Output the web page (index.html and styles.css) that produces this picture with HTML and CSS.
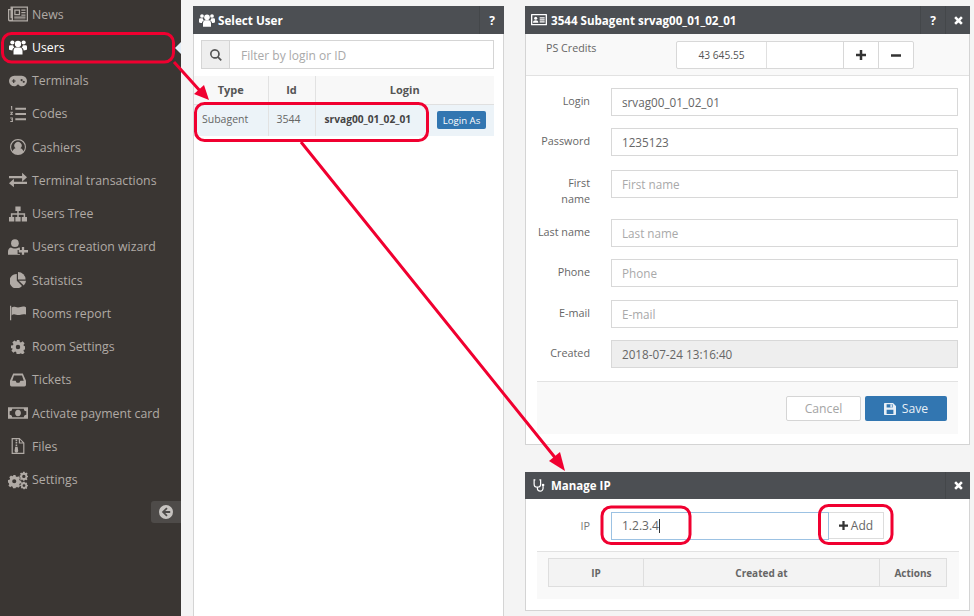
FILE: index.html
```html
<!DOCTYPE html>
<html lang="en">
<head>
<meta charset="utf-8">
<title>Manage IP</title>
<link rel="stylesheet" href="styles.css">
</head>
<body>
<svg width="0" height="0" class="defs">
  <defs>
    <symbol id="i-users" viewBox="0 0 24 20"><circle cx="12" cy="6" r="4.2"/><circle cx="4.5" cy="4" r="2.8"/><circle cx="19.5" cy="4" r="2.8"/><path d="M6 20v-5c0-3 2-4.500 3-4.500h6c1 0 3 1.500 3 4.500v5zM0 13V9.500C0 8 1 7.500 2 7.500h3.500c.3 1.500 1 2.500 1.800 3.200C5.500 11.500 4.500 13 4.500 14.500 2 14.500 0 14 0 13zM24 13V9.500c0-1.500-1-2-2-2h-3.500c-.3 1.500-1 2.500-1.800 3.200 1.800.8 2.800 2.300 2.800 3.800C22 14.500 24 14 24 13z"/></symbol>
    <symbol id="i-news" viewBox="0 0 24 18"><path fill-rule="evenodd" d="M0 3h3V0h21v18H2a2 2 0 0 1-2-2zM4.500 1.500V16H2a.5.500 0 0 1-.5-.5v-11h1.500V14h1.500zM6 1.500V16.500H22.500V1.500z M1 3z"/><path fill-rule="evenodd" d="M7.500 3.500h7v7h-7zM9 5v4h4V5z"/><path d="M16 3.500h5V5h-5zM16 6.500h5V8h-5zM16 9.500h5V11h-5zM7.500 12h13.500v1.500H7.500zM7.500 14.300h13.500v1H7.500z"/></symbol>
    <symbol id="i-game" viewBox="0 0 24 14"><path fill-rule="evenodd" d="M7 0h10a7 7 0 0 1 0 14c-2 0-3.500-1-4.500-2.500h-1C10.500 13 9 14 7 14A7 7 0 0 1 7 0zM5.500 4.500v1.700H3.800v1.600h1.700v1.700h1.600V7.800h1.700V6.200H7.100V4.500zM16.800 4.200a1.500 1.500 0 1 0 .01 0zM19.600 6.500a1.500 1.500 0 1 0 .01 0z"/></symbol>
    <symbol id="i-list" viewBox="0 0 18 18"><path d="M6 2h12v2.300H6zM6 7.800h12v2.300H6zM6 13.700h12V16H6z"/><path d="M1 0h1.500v4.500h-1zM.3 6.500h3v1.200l-1.600 1.500h1.600v1h-3V9l1.600-1.500H.3zM.3 13h3v5h-3v-1h2v-1h-1v-1h1v-1h-2z"/></symbol>
    <symbol id="i-usercircle" viewBox="0 0 20 20"><path fill-rule="evenodd" d="M10 0a10 10 0 1 1 0 20 10 10 0 0 1 0-20zM10 1.500a8.500 8.500 0 0 0-6.700 13.700C4 13 5.300 11.800 7 11.500a4.500 4.500 0 1 1 6 0c1.700.3 3 1.500 3.700 3.700A8.500 8.500 0 0 0 10 1.500z"/></symbol>
    <symbol id="i-exchange" viewBox="0 0 22 18"><path d="M0 4h16V0l6 5.500-6 5.500V7H0zM22 11H6V7.500L0 13l6 5v-4h16z"/></symbol>
    <symbol id="i-tree" viewBox="0 0 24 20"><path d="M8.500 0h7v6h-7zM0 14h7v6H0zM8.500 14h7v6h-7zM17 14h7v6h-7z"/><path d="M11 6h2v3h8.500v5h-2v-3H13v3h-2v-3H4.500v3h-2V9H11z"/></symbol>
    <symbol id="i-userplus" viewBox="0 0 26 20"><circle cx="9" cy="5" r="5"/><path d="M0 20v-4c0-3 2-5.500 4-5.500 1.500 1 3 1.500 5 1.500s3.500-.5 5-1.500c.5 0 1 .2 1.500.5V14h-3v5h3v1z"/><path d="M18 10h3v4h5v3h-5v3h-3v-3h-4v-3h4z"/></symbol>
    <symbol id="i-pie" viewBox="0 0 20 20"><path d="M8.500 2.500V11l6.500 6.500A9 9 0 1 1 8.500 2.500z"/><path d="M10 0a9.500 9.500 0 0 1 9.500 9.500H10z"/><path d="M11 11h9a9 9 0 0 1-2.800 6z"/></symbol>
    <symbol id="i-flag" viewBox="0 0 20 18"><path d="M0 0h1.500v18H0z"/><path d="M2 2c3-2 5 0 8 0s5-2 8-1c1 .3 2 1 2 1v9c-3-1-5 0-8 .5-3 .5-5-1-7-1-1 0-2 .5-3 1.500z"/></symbol>
    <symbol id="i-cog" viewBox="0 0 20 20"><path fill-rule="evenodd" d="M8 0h4l.6 2.800 1.600.7 2.400-1.600 2.800 2.800-1.600 2.400.7 1.600 2.800.6v4l-2.800.6-.7 1.600 1.600 2.400-2.800 2.800-2.400-1.600-1.600.7L12 20H8l-.6-2.800-1.600-.7-2.400 1.600-2.800-2.800 1.600-2.400-.7-1.600L0 12V8l2.800-.6.700-1.600L1.900 3.400l2.800-2.800 2.400 1.600 1.600-.7zM10 6.800a3.200 3.200 0 1 0 0 6.400 3.200 3.200 0 0 0 0-6.400z"/></symbol>
    <symbol id="i-inbox" viewBox="0 0 20 16"><path fill-rule="evenodd" d="M4 0h12l4 9v5a2 2 0 0 1-2 2H2a2 2 0 0 1-2-2V9zM5 2.500 2.800 9h4.200l1.300 2.500h3.400L13 9h4.200L15 2.500z"/></symbol>
    <symbol id="i-money" viewBox="0 0 24 14"><path fill-rule="evenodd" d="M0 0h24v14H0zM5 2a3 3 0 0 1-3 3v4a3 3 0 0 1 3 3h14a3 3 0 0 1 3-3V5a3 3 0 0 1-3-3zM12 3c2.200 0 3.500 1.800 3.500 4s-1.300 4-3.500 4-3.500-1.800-3.500-4S9.800 3 12 3z"/><path d="M11 5h1.500v3.500H14V10h-4V8.500h1V6.500h-1z"/></symbol>
    <symbol id="i-file" viewBox="0 0 16 20"><path fill-rule="evenodd" d="M0 0h10l6 6v14H0zM1.500 1.500v17h13V7H9V1.500zM10.500 2.200V5.500h3.300z"/><path d="M5 2h2v2H5zM5 5h2v2H5zM5 8h2v2H5zM4.500 11h3l.8 5a2 2 0 0 1-4.600 0z"/></symbol>
    <symbol id="i-cogs" viewBox="0 0 24 20"><path fill-rule="evenodd" d="M6 4h3l.4 1.800 1.500.6 1.500-1 2.100 2.100-1 1.500.6 1.500 1.800.4v3l-1.800.4-.6 1.500 1 1.500-2.100 2.100-1.500-1-1.500.6L9 20H6l-.4-1.800-1.500-.6-1.500 1L.5 16.500l1-1.500-.6-1.500L0 13v-3l1.900-.4.600-1.500-1-1.500 2.100-2.100 1.500 1 1.500-.6zM7.500 9a2.500 2.500 0 1 0 0 5 2.500 2.500 0 0 0 0-5z"/><path fill-rule="evenodd" d="M18 0h2l.3 1.200 1.200.5 1-.6 1 1.500-.8 1 .3 1.200H24v2h-1l-.4 1.200.8 1-1.400 1.300-1-.7-1.100.4L20 11h-2l-.3-1.100-1-.4-1 .7-1.400-1.300.8-1L14.700 6.700H14v-2h.9l.3-1.200-.8-1 1.400-1.400 1 .7 1-.5zM19 3.700a2 2 0 1 0 0 4 2 2 0 0 0 0-4z"/><path fill-rule="evenodd" d="M18.500 12h1.500l.3 1 .9.400.9-.5 1 1.100-.5.900.3.900 1 .3v1.500l-1 .3-.3.900.5.900-1 1-1-.4-.8.300-.3.500h-1.500l-.3-.9-.9-.4-.8.400-1.100-1 .5-.9-.3-.9-1-.3v-1.500l1-.3.300-.9-.5-.9 1.100-1.100.8.500.9-.400zM19.200 15a1.700 1.700 0 1 0 0 3.400 1.700 1.700 0 0 0 0-3.400z"/></symbol>
    <symbol id="i-back" viewBox="0 0 20 20"><path fill-rule="evenodd" d="M10 0a10 10 0 1 1 0 20 10 10 0 0 1 0-20zM10.500 3.500 4 10l6.500 6.500 1.800-1.800-3.400-3.400H16V8.700H8.900l3.400-3.400z"/></symbol>
    <symbol id="i-search" viewBox="0 0 16 16"><path fill-rule="evenodd" d="M6.500 0a6.500 6.500 0 0 1 5.300 10.300l4 4-1.600 1.600-4-4A6.500 6.500 0 1 1 6.500 0zM6.500 2.200a4.300 4.300 0 1 0 0 8.600 4.300 4.300 0 0 0 0-8.600z"/></symbol>
    <symbol id="i-times" viewBox="0 0 12 12"><path d="M2.700.3 6 3.500 9.300.3 11.700 2.700 8.500 6l3.200 3.300-2.400 2.400L6 8.500l-3.300 3.200-2.400-2.400L3.500 6 .3 2.700z"/></symbol>
    <symbol id="i-plus" viewBox="0 0 12 12"><path d="M4.500 0h3v4.500H12v3H7.500V12h-3V7.500H0v-3h4.500z"/></symbol>
    <symbol id="i-minus" viewBox="0 0 12 3"><path d="M0 0h12v3H0z"/></symbol>
    <symbol id="i-card" viewBox="0 0 24 18"><path fill-rule="evenodd" d="M1 0h22a1 1 0 0 1 1 1v15a1 1 0 0 1-1 1H1a1 1 0 0 1-1-1V1a1 1 0 0 1 1-1zM2 2v13h20V2z"/><circle cx="7" cy="6.500" r="2.300"/><path d="M3 13c0-2.500 1.500-3.500 4-3.500s4 1 4 3.500zM13 5h7.500v1.700H13zM13 8h7.500v1.700H13zM13 11h7.500v1.700H13z"/></symbol>
    <symbol id="i-steth" viewBox="0 0 14 16"><path fill="none" stroke="currentColor" stroke-width="1.500" d="M2.500 1H1v5a4 4 0 0 0 8 0V1H7.500M5 10v1.500a3.500 3.500 0 0 0 7 0V9"/><circle cx="12" cy="7.500" r="1.600"/></symbol>
    <symbol id="i-save" viewBox="0 0 16 16"><path fill-rule="evenodd" d="M1 0h11l4 4v11a1 1 0 0 1-1 1H1a1 1 0 0 1-1-1V1a1 1 0 0 1 1-1zM3.500 1.500V6h8V1.500zM3.500 9v5.500h9V9zM8.500 2h2v3.500h-2z"/></symbol>
  </defs>
</svg>

<aside class="sidebar">
  <nav class="nav">
    <a class="nav-item"><svg class="nav-icon"><use href="#i-news"/></svg>News</a>
    <a class="nav-item is-active"><svg class="nav-icon s18"><use href="#i-users"/></svg>Users</a>
    <a class="nav-item"><svg class="nav-icon s18"><use href="#i-game"/></svg>Terminals</a>
    <a class="nav-item"><svg class="nav-icon s16"><use href="#i-list"/></svg>Codes</a>
    <a class="nav-item"><svg class="nav-icon s16"><use href="#i-usercircle"/></svg>Cashiers</a>
    <a class="nav-item"><svg class="nav-icon s18"><use href="#i-exchange"/></svg>Terminal transactions</a>
    <a class="nav-item"><svg class="nav-icon s18"><use href="#i-tree"/></svg>Users Tree</a>
    <a class="nav-item"><svg class="nav-icon"><use href="#i-userplus"/></svg>Users creation wizard</a>
    <a class="nav-item"><svg class="nav-icon s16"><use href="#i-pie"/></svg>Statistics</a>
    <a class="nav-item"><svg class="nav-icon s16"><use href="#i-flag"/></svg>Rooms report</a>
    <a class="nav-item"><svg class="nav-icon s14"><use href="#i-cog"/></svg>Room Settings</a>
    <a class="nav-item"><svg class="nav-icon s16"><use href="#i-inbox"/></svg>Tickets</a>
    <a class="nav-item"><svg class="nav-icon"><use href="#i-money"/></svg>Activate payment card</a>
    <a class="nav-item"><svg class="nav-icon s16"><use href="#i-file"/></svg>Files</a>
    <a class="nav-item"><svg class="nav-icon"><use href="#i-cogs"/></svg>Settings</a>
  </nav>
  <button class="collapse"><svg class="collapse-icon"><use href="#i-back"/></svg></button>
</aside>

<main class="content">
  <section class="col-left panel">
    <header class="panel-head">
      <svg class="head-icon"><use href="#i-users"/></svg>
      <h2 class="panel-title">Select User</h2>
      <span class="head-btn">?</span>
    </header>
    <div class="search">
      <span class="search-addon"><svg class="search-icon"><use href="#i-search"/></svg></span>
      <span class="search-input">Filter by login or ID</span>
    </div>
    <table class="users">
      <colgroup><col class="c-type"><col class="c-id"><col class="c-login"><col></colgroup>
      <thead>
        <tr><th>Type</th><th>Id</th><th colspan="2">Login</th></tr>
      </thead>
      <tbody>
        <tr><td>Subagent</td><td>3544</td><td class="strong">srvag00_01_02_01</td><td class="act"><a class="btn-login">Login As</a></td></tr>
      </tbody>
    </table>
  </section>

  <div class="col-right">
    <section class="panel user-panel">
      <header class="panel-head">
        <svg class="head-icon"><use href="#i-card"/></svg>
        <h2 class="panel-title">3544 Subagent srvag00_01_02_01</h2>
        <span class="head-btn">?</span>
        <span class="head-btn"><svg class="x-icon"><use href="#i-times"/></svg></span>
      </header>
      <div class="credits">
        <span class="credits-label">PS Credits</span>
        <div class="credits-group">
          <span class="cg-value">43 645.55</span>
          <span class="cg-blank"></span>
          <span class="cg-btn"><svg class="pm-icon"><use href="#i-plus"/></svg></span>
          <span class="cg-btn"><svg class="pm-icon minus"><use href="#i-minus"/></svg></span>
        </div>
      </div>
      <form class="form">
        <div class="row"><label class="lbl">Login</label><span class="field">srvag00_01_02_01</span></div>
        <div class="row r-pass"><label class="lbl">Password</label><span class="field">1235123</span></div>
        <div class="row"><label class="lbl">First<br>name</label><span class="field ph">First name</span></div>
        <div class="row"><label class="lbl">Last name</label><span class="field ph">Last name</span></div>
        <div class="row r-phone"><label class="lbl">Phone</label><span class="field ph">Phone</span></div>
        <div class="row"><label class="lbl">E-mail</label><span class="field ph">E-mail</span></div>
        <div class="row"><label class="lbl">Created</label><span class="field disabled">2018-07-24 13:16:40</span></div>
      </form>
      <footer class="form-foot">
        <a class="btn-cancel">Cancel</a>
        <a class="btn-save"><svg class="save-icon"><use href="#i-save"/></svg>Save</a>
      </footer>
    </section>

    <section class="panel ip-panel">
      <header class="panel-head short">
        <svg class="head-icon steth"><use href="#i-steth"/></svg>
        <h2 class="panel-title">Manage IP</h2>
        <span class="head-btn"><svg class="x-icon"><use href="#i-times"/></svg></span>
      </header>
      <div class="ip-form">
        <label class="lbl">IP</label>
        <span class="ip-input">1.2.3.4<i class="caret"></i></span>
        <a class="btn-add"><svg class="add-icon"><use href="#i-plus"/></svg>Add</a>
      </div>
      <div class="ip-table-wrap">
        <table class="ip-table">
          <thead><tr><th class="ip-c1">IP</th><th>Created at</th><th class="ip-c3">Actions</th></tr></thead>
        </table>
      </div>
    </section>
  </div>
</main>

<i class="nav-pointer"></i>

<svg class="annotations" viewBox="0 0 974 616" width="974" height="616">
  <g fill="none" stroke="#f00030" stroke-width="3">
    <rect x="2.500" y="33.500" width="171" height="28.500" rx="9"/>
    <rect x="195.500" y="103.500" width="232" height="37" rx="9"/>
    <rect x="602" y="507" width="88" height="36.500" rx="9"/>
    <rect x="819.500" y="505.500" width="72.500" height="38" rx="9"/>
    <path d="M174 62 201 92M301 142 557 460"/>
  </g>
  <g fill="#f00030">
    <path d="M209 100 194 94 204 85z"/>
    <path d="M565 471 549 461 560 452z"/>
  </g>
</svg>
</body>
</html>
```

FILE: styles.css
```css
* { box-sizing: border-box; }
html, body { height: 100%; }
body {
  margin: 0;
  width: 974px;
  height: 616px;
  overflow: hidden;
  display: flex;
  position: relative;
  background: #f4f4f4;
  font-family: "Open Sans", "Liberation Sans", sans-serif;
  font-size: 12px;
  color: #555;
}
.defs { position: absolute; }

/* Sidebar */
.sidebar {
  width: 181px;
  flex: none;
  background: #3a3633;
  display: flex;
  flex-direction: column;
}
.nav { margin-top: -2.400px; }
.nav-item {
  display: flex;
  align-items: center;
  height: 33.250px;
  font-size: 12.300px;
  color: #b0aaa5;
}
.nav-item.is-active { color: #fff; }
.nav-icon {
  width: 20px;
  height: 20px;
  margin: 0 4px 0 8px;
  flex: none;
  fill: currentColor;
}
.nav-icon.s18 { width: 18px; height: 18px; margin: 0 5px 0 9px; }
.nav-icon.s16 { width: 16px; height: 16px; margin: 0 6px 0 10px; }
.nav-icon.s14 { width: 14px; height: 14px; margin: 0 7px 0 11px; }
.collapse {
  align-self: flex-end;
  width: 30px;
  height: 22px;
  margin-top: 5px;
  padding: 0;
  border: 0;
  border-radius: 3px 0 0 3px;
  background: #4e4b49;
  display: flex;
  align-items: center;
  justify-content: center;
}
.collapse-icon { width: 14px; height: 14px; fill: #c6c3c0; }
.nav-pointer {
  position: absolute;
  left: 175px;
  top: 42px;
  border: 6px solid transparent;
  border-left-width: 0;
  border-right-color: #e4eef7;
}

/* Layout */
.content {
  flex: 1;
  display: flex;
  gap: 21px;
  padding: 6px 5px 0 12px;
  min-width: 0;
}
.col-left { width: 311px; flex: none; }
.col-right { width: 445px; flex: none; display: flex; flex-direction: column; gap: 27px; }

/* Panels */
.panel {
  background: #fff;
  border: 1px solid #d4d4d4;
  border-top: 0;
  display: flex;
  flex-direction: column;
}
.col-left.panel { border-bottom: 0; }
.panel-head {
  height: 28px;
  flex: none;
  margin: 0 -1px;
  background: #4c4f53;
  color: #fff;
  display: flex;
  align-items: center;
  padding-left: 6px;
}
.head-icon { width: 16px; height: 14px; fill: #fff; flex: none; }
.head-icon.steth { width: 12px; height: 13px; margin-left: 2px; color: #fff; fill: #fff; }
.panel-title {
  flex: 1;
  margin: 0 0 0 3px;
  font-size: 11.700px;
  font-weight: 700;
  white-space: nowrap;
}
.user-panel .panel-title { margin-left: 4px; font-size: 11.600px; }
.ip-panel .panel-title { margin-left: 6px; font-size: 11.500px; }
.head-btn {
  width: 25px;
  height: 100%;
  border-left: 1px solid #44474a;
  display: flex;
  align-items: center;
  justify-content: center;
  font-size: 12px;
  font-weight: 700;
}
.x-icon { width: 9px; height: 9px; fill: #fff; }

/* Select user */
.search {
  display: flex;
  height: 29px;
  margin: 6px 9px 7px 7px;
  border: 1px solid #d5d5d5;
}
.search-addon {
  width: 28px;
  flex: none;
  background: #eee;
  border-right: 1px solid #d5d5d5;
  display: flex;
  align-items: center;
  justify-content: center;
}
.search-icon { width: 12px; height: 12px; fill: #555; }
.search-input {
  flex: 1;
  display: flex;
  align-items: center;
  padding: 2px 0 0 11px;
  font-size: 12px;
  color: #a9a9a9;
}
.users {
  width: 300px;
  border-collapse: collapse;
  table-layout: fixed;
  font-size: 10.500px;
}
.users th {
  height: 28px;
  padding: 0;
  background: #f8f8f8;
  border-right: 1px solid #e2e2e2;
  border-bottom: 1px solid #e0e0e0;
  font-weight: 700;
  font-size: 11px;
  color: #555;
}
.users th:last-child { border-right: 0; }
.c-type { width: 74px; }
.c-id { width: 47px; }
.c-login { width: 113px; }
.users td {
  height: 32px;
  padding: 0 0 2px 8px;
  background: #ecf3f8;
  border-right: 1px solid #e2e2e2;
  white-space: nowrap;
  color: #666;
}
.users td:last-child { border-right: 0; }
.users td.strong { padding-left: 9px; font-size: 10.200px; font-weight: 700; color: #444; border-right: 0; }
.users td.act { padding: 0 0 0 9px; background: #ecf3f8; }
.btn-login {
  display: flex;
  align-items: center;
  justify-content: center;
  width: 49px;
  height: 18px;
  background: #3276b1;
  border-radius: 2px;
  color: #fff;
  font-size: 9.600px;
}

/* Right panel */
.user-panel { height: 439px; }
.credits {
  height: 42px;
  flex: none;
  background: #f9f9f9;
  border-bottom: 1px solid #e2e2e2;
  display: flex;
  padding: 7px 0 0 20px;
}
.credits-label { width: 130px; font-size: 10.700px; color: #666; line-height: 14px; }
.credits-group {
  display: flex;
  height: 28px;
  width: 238px;
  background: #fff;
  border: 1px solid #d8d8d8;
  border-radius: 2px;
}
.cg-value {
  width: 90px;
  display: flex;
  align-items: center;
  justify-content: center;
  font-size: 10.200px;
  color: #555;
  border-right: 1px solid #e0e0e0;
}
.cg-blank { width: 76px; }
.cg-btn {
  flex: 1;
  display: flex;
  align-items: center;
  justify-content: center;
  border-left: 1px solid #d8d8d8;
}
.pm-icon { width: 10px; height: 10px; fill: #333; }
.pm-icon.minus { height: 3px; }

.form { padding: 12px 11px 0 0; flex: none; }
.row { display: flex; align-items: flex-start; margin-bottom: 12px; }
.row.r-pass { margin-bottom: 14px; }
.row.r-phone { margin-bottom: 13px; }
.lbl {
  width: 64px;
  flex: none;
  text-align: right;
  font-size: 10.800px;
  line-height: 16px;
  color: #666;
  margin-right: 21px;
  padding-left: 6px;
  white-space: nowrap;
}
.form .lbl { padding-top: 5px; }
.field {
  flex: 1;
  height: 28px;
  border: 1px solid #d8d8d8;
  display: flex;
  align-items: center;
  padding-left: 10px;
  font-size: 11.700px;
  color: #666;
}
.field.ph { color: #a9a9a9; }
.field.disabled { background: #eee; }
.form-foot {
  margin: 1px 11px 0 11px;
  height: 53px;
  border-top: 1px solid #e2e2e2;
  background: #f9f9f9;
  display: flex;
  align-items: flex-start;
  justify-content: flex-end;
  gap: 4px;
  padding: 14px 11px 0 0;
}
.btn-cancel, .btn-save {
  height: 25px;
  display: flex;
  align-items: center;
  justify-content: center;
  font-size: 12.200px;
  border-radius: 2px;
}
.btn-cancel { width: 75px; background: #fff; border: 1px solid #d5d5d5; color: #a5a5a5; }
.btn-save { width: 82px; background: #3276b1; color: #e8eff6; }
.save-icon { width: 12px; height: 12px; margin-right: 6px; fill: #e8eff6; }

/* Manage IP */
.ip-panel { height: 139px; }
.panel-head.short { height: 27px; }
.ip-form {
  display: flex;
  align-items: center;
  height: 52px;
  padding-top: 1px;
}
.ip-form .lbl { color: #777; }
.ip-input {
  width: 218px;
  height: 28px;
  border: 1px solid #9cc2e3;
  display: flex;
  align-items: center;
  padding-left: 10px;
  font-size: 12px;
  color: #666;
}
.caret { width: 1px; height: 14px; background: #333; }
.btn-add {
  width: 55px;
  height: 27px;
  border: 1px solid #ddd;
  border-left: 0;
  background: #fff;
  display: flex;
  align-items: center;
  justify-content: center;
  font-size: 12px;
  color: #666;
}
.add-icon { width: 9px; height: 9px; margin-right: 3px; fill: #333; }
.ip-table-wrap {
  margin: 0 10px 0 11px;
  height: 48px;
  border-top: 1px solid #e2e2e2;
  background: #f9f9f9;
  padding: 6px 11px 0;
}
.ip-table {
  width: 399px;
  border-collapse: collapse;
  table-layout: fixed;
  font-size: 10px;
}
.ip-table th {
  height: 28px;
  padding: 0;
  background: #f3f3f3;
  border: 1px solid #dedede;
  color: #666;
  font-weight: 700;
}
.ip-c1 { width: 95px; }
.ip-c3 { width: 67px; }

/* Annotations */
.annotations { position: absolute; left: 0; top: 0; pointer-events: none; }
```
